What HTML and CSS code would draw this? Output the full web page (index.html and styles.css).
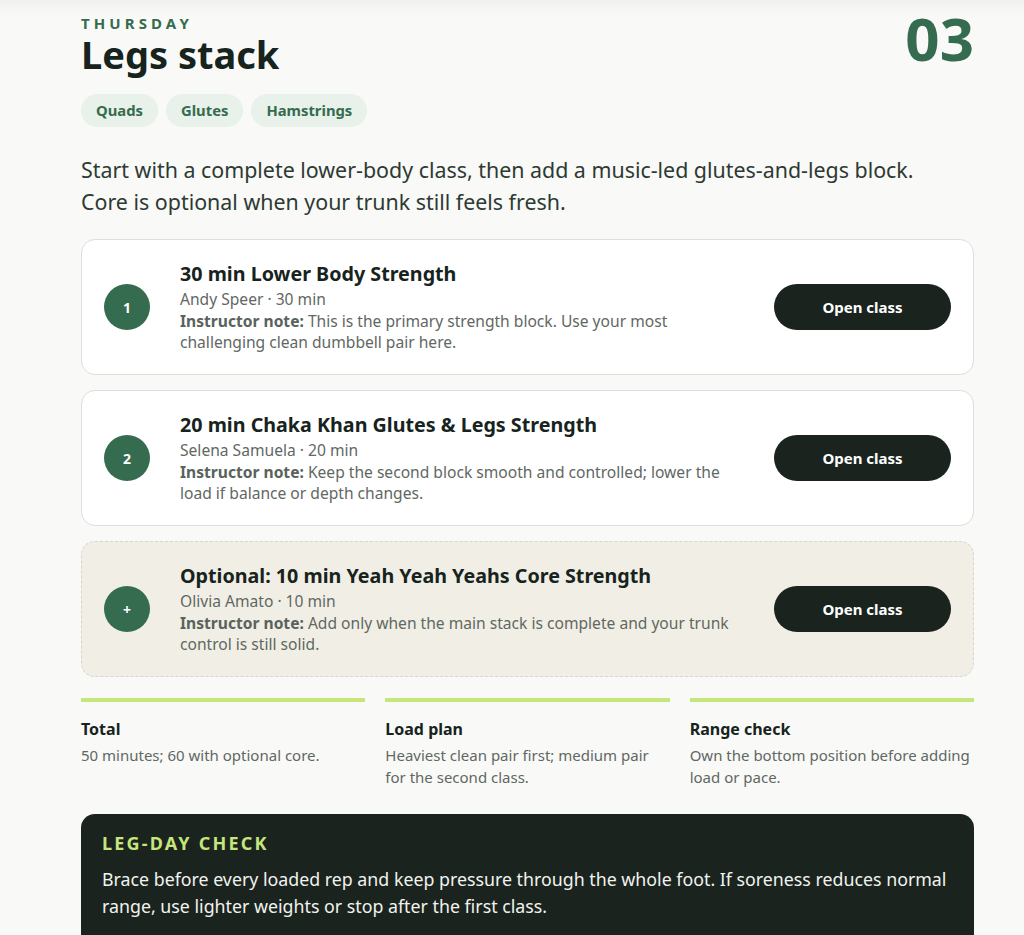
FILE: index.html
```html
<!DOCTYPE html>
<html lang="en">
<head>
<meta charset="utf-8">
<title>Thursday – Legs stack</title>
<link rel="stylesheet" href="styles.css">
</head>
<body>
<main class="page">
  <header class="head">
    <div class="head-text">
      <div class="eyebrow">THURSDAY</div>
      <h1 class="title">Legs stack</h1>
    </div>
    <div class="day-num">03</div>
  </header>
  <ul class="chips">
    <li class="chip">Quads</li>
    <li class="chip">Glutes</li>
    <li class="chip">Hamstrings</li>
  </ul>
  <p class="intro">Start with a complete lower-body class, then add a music-led glutes-and-legs block. Core is optional when your trunk still feels fresh.</p>

  <section class="classes">
    <article class="card">
      <div class="badge">1</div>
      <div class="card-body">
        <h2 class="card-title">30 min Lower Body Strength</h2>
        <div class="meta">Andy Speer · 30 min</div>
        <div class="note"><strong>Instructor note:</strong> This is the primary strength block. Use your most challenging clean dumbbell pair here.</div>
      </div>
      <a class="btn" href="#">Open class</a>
    </article>
    <article class="card">
      <div class="badge">2</div>
      <div class="card-body">
        <h2 class="card-title">20 min Chaka Khan Glutes &amp; Legs Strength</h2>
        <div class="meta">Selena Samuela · 20 min</div>
        <div class="note"><strong>Instructor note:</strong> Keep the second block smooth and controlled; lower the load if balance or depth changes.</div>
      </div>
      <a class="btn" href="#">Open class</a>
    </article>
    <article class="card card-optional">
      <div class="badge">+</div>
      <div class="card-body">
        <h2 class="card-title">Optional: 10 min Yeah Yeah Yeahs Core Strength</h2>
        <div class="meta">Olivia Amato · 10 min</div>
        <div class="note"><strong>Instructor note:</strong> Add only when the main stack is complete and your trunk control is still solid.</div>
      </div>
      <a class="btn" href="#">Open class</a>
    </article>
  </section>

  <section class="stats">
    <div class="stat">
      <h3 class="stat-title">Total</h3>
      <p class="stat-text">50 minutes; 60 with optional core.</p>
    </div>
    <div class="stat">
      <h3 class="stat-title">Load plan</h3>
      <p class="stat-text">Heaviest clean pair first; medium pair for the second class.</p>
    </div>
    <div class="stat">
      <h3 class="stat-title">Range check</h3>
      <p class="stat-text">Own the bottom position before adding load or pace.</p>
    </div>
  </section>

  <section class="check">
    <h3 class="check-title">LEG-DAY CHECK</h3>
    <p class="check-text">Brace before every loaded rep and keep pressure through the whole foot. If soreness reduces normal range, use lighter weights or stop after the first class.</p>
  </section>
</main>
</body>
</html>
```

FILE: styles.css
```css
* { box-sizing: border-box; }
html, body { margin: 0; padding: 0; }
body {
  font-family: "Noto Sans", "Open Sans", "DejaVu Sans", sans-serif;
  background: linear-gradient(to bottom, #efefed 0px, #f7f7f5 10px, #f9f9f7 18px);
  background-color: #f9f9f7;
  color: #17231d;
  min-height: 935px;
}
.page {
  width: 893px;
  margin: 0 0 0 81px;
  padding-top: 0;
}
.head {
  display: flex;
  justify-content: space-between;
  align-items: flex-start;
}
.head-text { padding-top: 14px; }
.eyebrow {
  font-size: 15px;
  font-weight: 700;
  letter-spacing: 4.1px;
  color: #356b4e;
  line-height: 18px;
}
.title {
  margin: -1px 0 0;
  font-size: 38px;
  font-weight: 700;
  line-height: 46px;
  color: #17231d;
}
.day-num {
  font-size: 60px;
  font-weight: 700;
  line-height: 76px;
  color: #356b4e;
}
.chips {
  list-style: none;
  margin: 17px 0 0;
  padding: 0;
  display: flex;
  gap: 8px;
}
.chip {
  background: #e8f1ea;
  color: #356b4e;
  font-size: 14.8px;
  font-weight: 700;
  line-height: 33px;
  padding: 0 15px;
  border-radius: 17px;
}
.intro {
  margin: 27px 0 0;
  font-size: 21.4px;
  line-height: 32px;
  color: #2d3a33;
  max-width: 860px;
}
.classes {
  margin-top: 21px;
  display: flex;
  flex-direction: column;
  gap: 15px;
}
.card {
  display: flex;
  align-items: center;
  gap: 30px;
  background: #ffffff;
  border: 1px solid #dcdfdb;
  border-radius: 14px;
  padding: 20px 22px;
  min-height: 136px;
}
.card-optional {
  background: #f1efe5;
  border: 1px dashed #d6d6cf;
}
.badge {
  flex: 0 0 46px;
  width: 46px;
  height: 46px;
  border-radius: 50%;
  background: #356b4e;
  color: #ffffff;
  font-size: 14px;
  font-weight: 700;
  display: flex;
  align-items: center;
  justify-content: center;
}
.card-body { flex: 1; }
.card-title {
  margin: 0 0 2px;
  font-size: 19.7px;
  font-weight: 700;
  line-height: 27px;
  color: #17231d;
}
.meta, .note {
  font-size: 15.6px;
  line-height: 21.5px;
  color: #5f6863;
}
.note strong { font-weight: 700; color: #5a625d; }
.btn {
  flex: 0 0 177px;
  height: 46px;
  border-radius: 23px;
  background: #1b231e;
  color: #ffffff;
  font-size: 15px;
  font-weight: 700;
  text-decoration: none;
  display: flex;
  align-items: center;
  justify-content: center;
}
.stats {
  margin-top: 21px;
  display: grid;
  grid-template-columns: repeat(3, 1fr);
  gap: 20px;
}
.stat {
  border-top: 4px solid #c6e57a;
  padding-top: 16px;
}
.stat-title {
  margin: 0 0 5px;
  font-size: 16px;
  font-weight: 700;
  line-height: 22px;
  color: #17231d;
}
.stat-text {
  margin: 0;
  font-size: 15px;
  line-height: 21.5px;
  color: #5f6863;
}
.check {
  margin-top: 26px;
  background: #1b231e;
  border-radius: 14px;
  padding: 17px 21px 30px;
}
.check-title {
  margin: 0 0 11px;
  font-size: 18px;
  font-weight: 700;
  letter-spacing: 2.2px;
  line-height: 24px;
  color: #c6e57a;
}
.check-text {
  margin: 0;
  font-size: 17.8px;
  line-height: 27px;
  color: #f1f3ef;
}
```
